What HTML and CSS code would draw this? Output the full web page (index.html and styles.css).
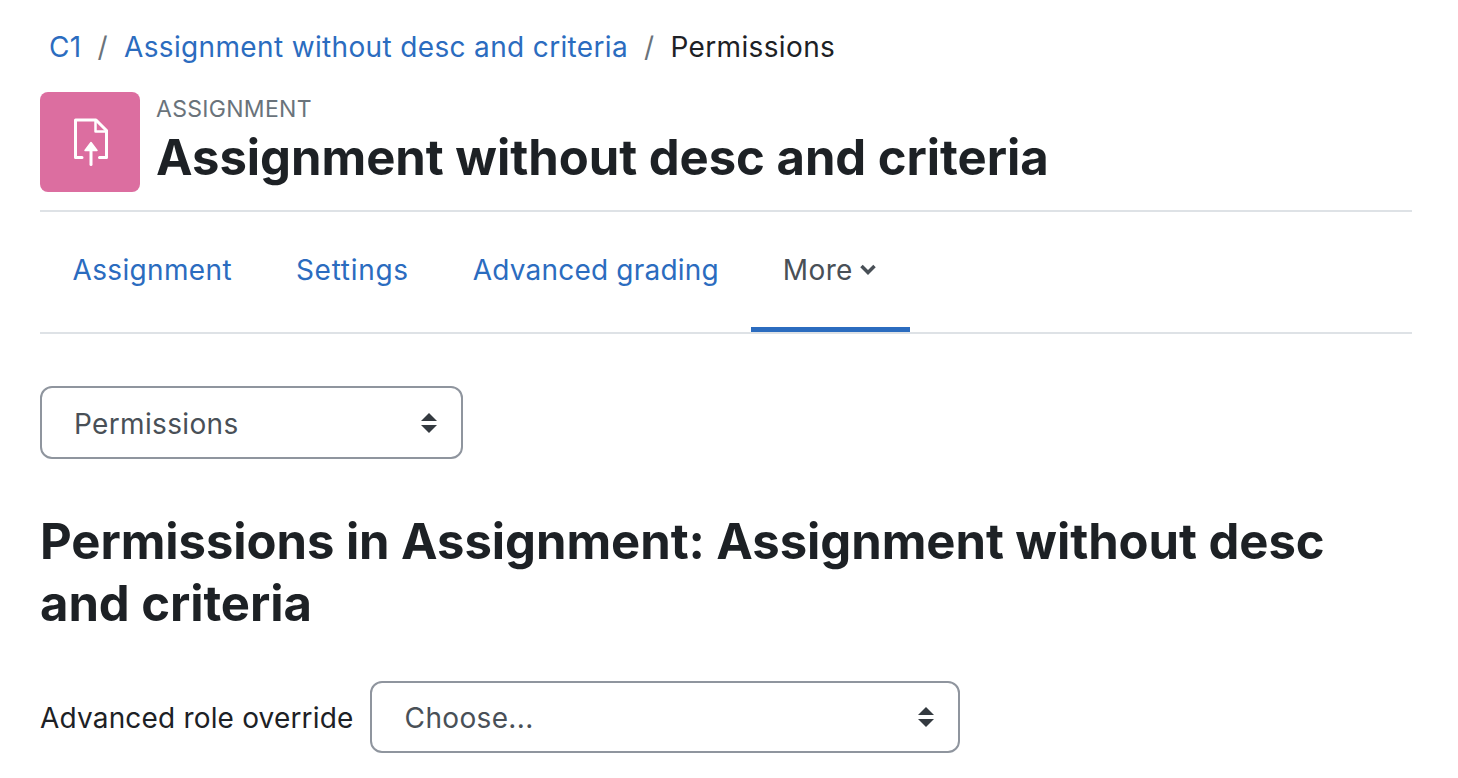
FILE: index.html

```html
<!DOCTYPE html>
<html lang="en">
<head>
  <meta charset="UTF-8">
  <title>Permissions</title>
  <link rel="stylesheet" href="styles.css">
</head>
<body>
  <nav class="breadcrumb">
    <a href="#">C1</a>
    <span class="sep">/</span>
    <a href="#">Assignment without desc and criteria</a>
    <span class="sep">/</span>
    <span>Permissions</span>
  </nav>

  <header class="page-header">
    <div class="activity-icon">
      <svg width="36" height="48" viewBox="0 0 36 48" fill="none" stroke="#fff" stroke-width="3" stroke-linejoin="round" stroke-linecap="round">
        <path d="M10 39.500H3.500V2H24L34.500 12.500V39.500H27.500"/>
        <path d="M23.500 3V13.500H34" stroke-width="2.500"/>
        <path d="M19 46.500V31"/>
        <path d="M19 24.500L25 32.500H13Z" fill="#fff" stroke-width="1.500"/>
      </svg>
    </div>
    <div class="header-text">
      <div class="activity-type">ASSIGNMENT</div>
      <h1>Assignment without desc and criteria</h1>
    </div>
  </header>

  <ul class="tabs">
    <li><a href="#">Assignment</a></li>
    <li class="tab-settings"><a href="#">Settings</a></li>
    <li class="tab-grading"><a href="#">Advanced grading</a></li>
    <li class="active">
      <a href="#">More
        <svg class="chevron" width="16" height="11" viewBox="0 0 16 11" fill="none" stroke="#495057" stroke-width="3.500">
          <path d="M1.500 2L8 8.500L14.500 2"/>
        </svg>
      </a>
    </li>
  </ul>

  <div class="select select-nav">
    <span>Permissions</span>
    <svg class="updown" width="16" height="20" viewBox="0 0 16 20" fill="#343a40"><path d="M8 0L16 8H0ZM0 12H16L8 20Z"/></svg>
  </div>

  <h2>Permissions in Assignment: Assignment without desc and criteria</h2>

  <div class="form-row">
    <label>Advanced role override</label>
    <div class="select select-role">
      <span>Choose...</span>
      <svg class="updown" width="16" height="20" viewBox="0 0 16 20" fill="#343a40"><path d="M8 0L16 8H0ZM0 12H16L8 20Z"/></svg>
    </div>
  </div>
</body>
</html>
```

FILE: styles.css

```css
body {
  margin: 0;
  padding: 0 46px 0 40px;
  font-family: Inter, 'Liberation Sans', sans-serif;
  font-size: 28px;
  letter-spacing: 0.35px;
  color: #1d2125;
  background: #fff;
  height: 778px;
  box-sizing: border-box;
  overflow: hidden;
}
a {
  color: #2b6cbf;
  text-decoration: none;
}
.breadcrumb {
  display: flex;
  align-items: center;
  gap: 16px;
  height: 34px;
  padding: 30px 0 0 9px;
  line-height: 34px;
}
.sep {
  color: #6a737b;
}
.page-header {
  display: flex;
  align-items: center;
  gap: 16px;
  margin-top: 28px;
  padding-bottom: 18px;
  border-bottom: 2px solid #dee2e6;
}
.activity-icon {
  width: 100px;
  height: 100px;
  flex: none;
  display: flex;
  align-items: center;
  justify-content: center;
  background: #dc6ea0;
  border-radius: 8px;
}
.activity-type {
  font-size: 23px;
  line-height: 28px;
  letter-spacing: 0.3px;
  color: #6a737b;
}
h1 {
  margin: 4px 0 0;
  font-size: 49px;
  line-height: 62px;
  font-weight: 700;
  letter-spacing: -0.03px;
}
.tabs {
  display: flex;
  list-style: none;
  margin: 0;
  padding: 0;
  height: 120px;
  border-bottom: 2px solid #dee2e6;
}
.tabs li a {
  display: flex;
  align-items: center;
  gap: 7px;
  padding: 0 32.500px;
  height: 115px;
}
.tabs .tab-settings a {
  padding: 0 31.500px;
  letter-spacing: 0.7px;
}
.tabs .tab-grading a {
  letter-spacing: 0.2px;
}
.tabs li.active {
  border-bottom: 5px solid #2b6cbf;
  height: 115px;
}
.tabs li.active a {
  color: #495057;
  padding: 0 34px 0 31.500px;
}
.select {
  display: flex;
  align-items: center;
  justify-content: space-between;
  box-sizing: border-box;
  height: 72px;
  padding: 0 24px 0 33px;
  border: 2px solid #8f959e;
  border-radius: 12px;
  color: #495057;
}
.select-nav {
  width: 423px;
  height: 73px;
  margin-top: 52px;
  padding-left: 32px;
}
.select-nav span {
  margin-top: 2px;
}
.select-role {
  width: 590px;
}
.select-role span {
  margin-top: 2px;
}
h2 {
  margin: 52px 0 0;
  font-size: 49px;
  line-height: 62px;
  font-weight: 700;
  letter-spacing: -0.06px;
}
.form-row {
  display: flex;
  align-items: center;
  gap: 16px;
  margin-top: 46px;
}
label {
  margin-top: 2px;
  color: #1d2125;
  letter-spacing: 0.18px;
}
```
